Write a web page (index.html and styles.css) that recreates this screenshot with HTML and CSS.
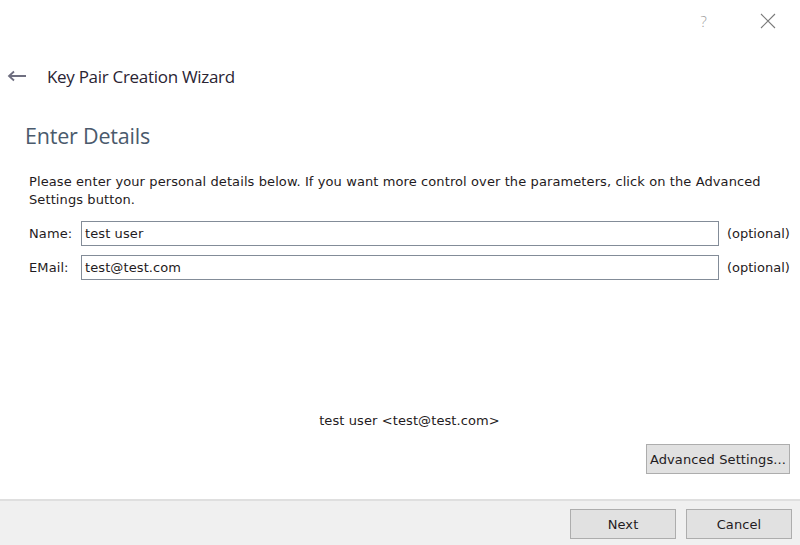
FILE: index.html
```html
<!DOCTYPE html>
<html>
<head>
<meta charset="utf-8">
<link rel="stylesheet" href="styles.css">
</head>
<body>
<div class="window">
  <div class="titlebar">
    <span class="help">?</span>
    <span class="close">
      <svg width="16" height="16" viewBox="0 0 16 16"><path d="M1 1 L15 15 M15 1 L1 15" stroke="#7a7a7a" stroke-width="1.1" fill="none"/></svg>
    </span>
  </div>
  <div class="wizard-head">
    <span class="back">
      <svg width="20" height="12" viewBox="0 0 20 12"><path d="M19 6 H3 M7 1.5 L2 6 L7 10.5" stroke="#6f6f80" stroke-width="1.8" fill="none"/></svg>
    </span>
    <span class="wizard-title">Key Pair Creation Wizard</span>
  </div>
  <div class="content">
    <h2 class="page-title">Enter Details</h2>
    <p class="intro">Please enter your personal details below. If you want more control over the parameters, click on the Advanced Settings button.</p>
    <div class="form">
      <div class="row">
        <span class="label">Name:</span>
        <div class="field">test user</div>
        <span class="opt">(optional)</span>
      </div>
      <div class="row">
        <span class="label">EMail:</span>
        <div class="field">test@test.com</div>
        <span class="opt">(optional)</span>
      </div>
    </div>
    <div class="spacer"></div>
    <div class="summary">test user &lt;test@test.com&gt;</div>
    <div class="adv-row">
      <button class="btn adv">Advanced Settings...</button>
    </div>
  </div>
  <div class="footer">
    <button class="btn wide">Next</button>
    <button class="btn wide">Cancel</button>
  </div>
</div>
</body>
</html>
```

FILE: styles.css
```css
html, body {
  margin: 0;
  padding: 0;
  background: #ffffff;
}
.window {
  width: 800px;
  height: 545px;
  display: flex;
  flex-direction: column;
  font-family: "DejaVu Sans", Verdana, sans-serif;
  font-size: 13px;
  letter-spacing: 0.1px;
  color: #1f1b22;
}
.titlebar {
  height: 42px;
  display: flex;
  justify-content: flex-end;
  align-items: center;
  padding-right: 24px;
  gap: 53px;
}
.help {
  font-family: "Open Sans", sans-serif;
  font-size: 15px;
  color: #9c9c9c;
  font-weight: 300;
}
.close {
  display: flex;
}
.wizard-head {
  height: 70px;
  display: flex;
  align-items: center;
  padding-left: 7px;
  box-sizing: border-box;
  padding-bottom: 2px;
}
.back {
  display: flex;
  width: 40px;
}
.wizard-title {
  font-family: "Open Sans", sans-serif;
  font-size: 17px;
  color: #2a2433;
  letter-spacing: -0.3px;
}
.content {
  flex: 1;
  display: flex;
  flex-direction: column;
  padding: 0 10px 0 29px;
}
.page-title {
  margin: 0 0 0 -4px;
  font-family: "Open Sans", sans-serif;
  font-weight: 400;
  font-size: 21.5px;
  color: #4a5a6c;
  height: 48px;
  line-height: 48px;
  letter-spacing: -0.2px;
}
.intro {
  margin: 13px 0 0 0;
  line-height: 18px;
}
.form {
  margin-top: 12px;
  display: flex;
  flex-direction: column;
  gap: 9px;
}
.row {
  display: flex;
  align-items: center;
  height: 25px;
}
.label {
  width: 52px;
  flex-shrink: 0;
}
.field {
  width: 638px;
  flex-shrink: 0;
  height: 25px;
  box-sizing: border-box;
  border: 1px solid #838c98;
  padding: 0 0 0 3px;
  line-height: 23px;
}
.opt {
  margin-left: 8px;
  white-space: nowrap;
  letter-spacing: 0;
}
.spacer {
  flex: 1;
}
.summary {
  text-align: center;
  margin-bottom: 16px;
}
.adv-row {
  display: flex;
  justify-content: flex-end;
  margin-bottom: 25px;
}
.btn {
  font-family: "DejaVu Sans", Verdana, sans-serif;
  font-size: 13px;
  letter-spacing: 0.1px;
  color: #1f1b22;
  background: #e1e1e1;
  border: 1px solid #adadad;
  height: 30px;
  padding: 0 3px;
  margin: 0;
}
.footer {
  height: 46px;
  box-sizing: border-box;
  background: #f0f0f0;
  border-top: 2px solid #dfdfdf;
  display: flex;
  justify-content: flex-end;
  align-items: center;
  gap: 10px;
  padding: 2px 8px 0 0;
}
.wide {
  width: 106px;
}
```
